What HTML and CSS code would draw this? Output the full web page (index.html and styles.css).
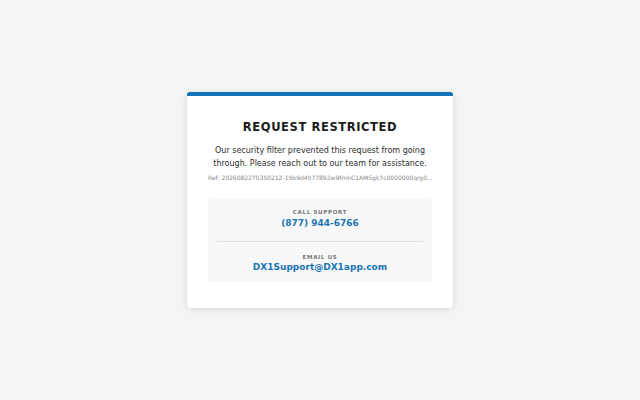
FILE: index.html
```html
<!DOCTYPE html>
<html>
<head>
<meta charset="utf-8">
<link rel="stylesheet" href="styles.css">
</head>
<body>
<div class="page">
  <div class="card">
    <h1 class="title">REQUEST RESTRICTED</h1>
    <p class="message">Our security filter prevented this request from going through. Please reach out to our team for assistance.</p>
    <p class="ref">Ref: 20260822T035021Z-15b9d4577892w9fmhC1AMSgk7c0000000qrg0...</p>
    <div class="contact">
      <div class="item">
        <div class="label">CALL SUPPORT</div>
        <div class="value">(877) 944-6766</div>
      </div>
      <div class="divider"></div>
      <div class="item">
        <div class="label">EMAIL US</div>
        <div class="value">DX1Support@DX1app.com</div>
      </div>
    </div>
  </div>
</div>
</body>
</html>
```
FILE: styles.css
```css
html, body {
  margin: 0;
  padding: 0;
  height: 100%;
  background: #f4f4f4;
  font-family: "DejaVu Sans", sans-serif;
}
.page {
  height: 100%;
  display: flex;
  align-items: center;
  justify-content: center;
}
.card {
  width: 266px;
  box-sizing: border-box;
  background: #ffffff;
  border-top: 4px solid #1273b8;
  border-radius: 3px;
  box-shadow: 0 1px 6px rgba(0,0,0,0.12);
  padding: 23px 21px 25px;
  text-align: center;
}
.title {
  margin: 0;
  font-size: 11.5px;
  line-height: 16px;
  font-weight: bold;
  letter-spacing: 0.6px;
  color: #1c1c1c;
}
.message {
  margin: 9px 0 0;
  font-size: 8px;
  line-height: 13px;
  color: #2e2e2e;
}
.ref {
  margin: 3px 0 0;
  font-size: 6px;
  line-height: 9px;
  color: #888888;
  white-space: nowrap;
  overflow: hidden;
}
.contact {
  margin-top: 17px;
  background: #f8f8f8;
  border-radius: 2px;
  padding: 9px 9px 9px;
}
.item {
  display: flex;
  flex-direction: column;
  align-items: center;
}
.label {
  font-size: 5.5px;
  line-height: 8px;
  font-weight: bold;
  letter-spacing: 0.7px;
  color: #777777;
}
.value {
  font-size: 9px;
  line-height: 13px;
  margin-top: 0.5px;
  font-weight: bold;
  color: #1a74b4;
}
.divider {
  height: 1px;
  background: #e2e2e2;
  margin: 11px 0 11px;
}
```
